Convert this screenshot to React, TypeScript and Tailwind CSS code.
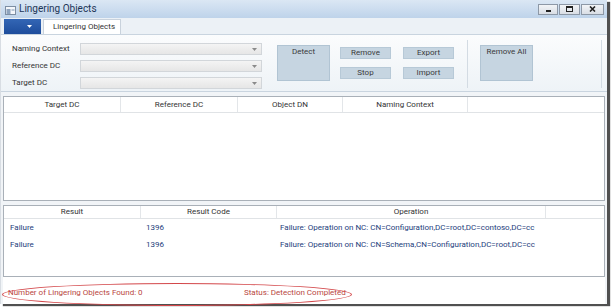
import React from "react";

const Combo = () => (
  <div className="h-[12px] w-[182px] border border-[#d2d6da] bg-gradient-to-b from-[#f4f4f4] to-[#e6e6e6] flex items-center justify-end pr-[4px]">
    <svg width="5" height="3" viewBox="0 0 5 3"><path d="M0 0 L5 0 L2.5 3 Z" fill="#8a8a8a" /></svg>
  </div>
);

const SmallBtn = ({ label }: { label: string }) => (
  <div className="h-[12px] w-[51px] bg-[#c6d5e1] border border-[#b7c9d7] flex items-center justify-center text-[#3a3a3a]">
    {label}
  </div>
);

const BigBtn = ({ label }: { label: string }) => (
  <div className="h-[36px] w-[53px] bg-[#c6d5e1] border border-[#b1c4d3] flex justify-center pt-[2px] text-[#3a3a3a]">
    {label}
  </div>
);

export default function App() {
  return (
    <div className="w-[611px] h-[308px] bg-white overflow-hidden relative font-['Roboto',sans-serif] text-[8px] leading-none">
      <div className="w-[607px] h-[304px] flex flex-col bg-[#f1f4f7] border-l border-[#d8dde3] shadow-[3px_2px_1px_#505050]">
        {/* Title bar */}
        <div className="h-[18px] flex items-center bg-gradient-to-b from-[#dbe7f4] to-[#bed3ea] shrink-0">
          <svg className="ml-[4px] mt-[2px]" width="11" height="9" viewBox="0 0 11 9">
            <rect x="0.5" y="0.5" width="10" height="8" fill="#f4f7fb" stroke="#7d8ea3" />
            <rect x="1.5" y="3" width="4" height="5" fill="#8fa4bd" />
            <rect x="6.5" y="3" width="3" height="2" fill="#b9c7d6" />
          </svg>
          <span className="ml-[3px] text-[10px] text-[#1d3557]">Lingering Objects</span>
          <div className="ml-auto mr-[3px] flex gap-[1px] items-center">
            <div className="w-[20px] h-[11px] bg-gradient-to-b from-[#f2f4f7] to-[#d9dee5] border border-[#8d98a6] flex items-end justify-center pb-[2px]">
              <div className="w-[5px] h-[2px] bg-[#222]" />
            </div>
            <div className="w-[21px] h-[11px] bg-gradient-to-b from-[#f2f4f7] to-[#d9dee5] border border-[#8d98a6] flex items-center justify-center">
              <div className="w-[7px] h-[6px] border border-[#222] border-t-2" />
            </div>
            <div className="w-[23px] h-[11px] bg-gradient-to-b from-[#f2f4f7] to-[#d9dee5] border border-[#8d98a6] flex items-center justify-center">
              <svg width="7" height="6" viewBox="0 0 7 6"><path d="M1 0.5 L6 5.5 M6 0.5 L1 5.5" stroke="#222" strokeWidth="1.6" /></svg>
            </div>
          </div>
        </div>
        {/* Tab row */}
        <div className="h-[16px] flex items-end bg-[#ecf1f6] shrink-0">
          <div className="ml-[3px] w-[37px] h-[15px] bg-gradient-to-b from-[#3366b5] to-[#1e4d9c] flex items-center pl-[23px]">
            <svg width="5" height="3" viewBox="0 0 5 3"><path d="M0 0 L5 0 L2.5 3 Z" fill="#fff" /></svg>
          </div>
          <div className="ml-[2px] w-[78px] h-[15px] bg-white border border-b-0 border-[#c9d2dc] flex items-center pl-[9px] text-[#333] whitespace-nowrap">
            Lingering Objects
          </div>
        </div>
        {/* Ribbon */}
        <div className="h-[58px] shrink-0 bg-gradient-to-b from-[#fbfcfd] to-[#eef3f7] border-t border-b border-[#c9d4df] flex items-start">
          <div className="ml-[11px] mt-[8px] grid grid-cols-[68px_182px] gap-y-[5px] items-center text-[#333]">
            <span>Naming Context</span>
            <Combo />
            <span>Reference DC</span>
            <Combo />
            <span>Target DC</span>
            <Combo />
          </div>
          <div className="ml-[15px] mt-[10px]"><BigBtn label="Detect" /></div>
          <div className="ml-[10px] mt-[12px] flex flex-col gap-[8px]">
            <SmallBtn label="Remove" />
            <SmallBtn label="Stop" />
          </div>
          <div className="ml-[12px] mt-[12px] flex flex-col gap-[8px]">
            <SmallBtn label="Export" />
            <SmallBtn label="Import" />
          </div>
          <div className="ml-[13px] mt-[5px] w-px h-[48px] bg-[#d3dbe3]" />
          <div className="ml-[12px] mt-[10px]"><BigBtn label="Remove All" /></div>
          <div className="ml-[68px] mt-[5px] w-px h-[48px] bg-[#d3dbe3]" />
        </div>
        {/* Table 1 */}
        <div className="mt-[4px] mx-[2px] h-[105px] shrink-0 bg-white border border-[#a9b0b8] flex flex-col">
          <div className="h-[16px] border-b border-[#e0e3e6] flex items-center text-[#333]">
            <div className="w-[117px] h-full flex items-center justify-center border-r border-[#e3e6e9]">Target DC</div>
            <div className="w-[117px] h-full flex items-center justify-center border-r border-[#e3e6e9]">Reference DC</div>
            <div className="w-[105px] h-full flex items-center justify-center border-r border-[#e3e6e9]">Object DN</div>
            <div className="w-[125px] h-full flex items-center justify-center border-r border-[#e3e6e9]">Naming Context</div>
            <div className="flex-1" />
          </div>
        </div>
        {/* Table 2 */}
        <div className="mt-[4px] mx-[2px] h-[72px] shrink-0 bg-white border border-[#a9b0b8] flex flex-col">
          <div className="h-[13px] border-b border-[#e0e3e6] flex items-center text-[#333] shrink-0">
            <div className="w-[137px] h-full flex items-center justify-center border-r border-[#e3e6e9]">Result</div>
            <div className="w-[136px] h-full flex items-center justify-center border-r border-[#e3e6e9]">Result Code</div>
            <div className="w-[269px] h-full flex items-center justify-center border-r border-[#e3e6e9]">Operation</div>
            <div className="flex-1" />
          </div>
          {[
            "Failure: Operation on NC: CN=Configuration,DC=root,DC=contoso,DC=cc",
            "Failure: Operation on NC: CN=Schema,CN=Configuration,DC=root,DC=cc",
          ].map((op, i) => (
            <div key={i} className="h-[16px] flex items-center text-[#24407c] mt-[1px]">
              <div className="w-[137px] pl-[6px]">Failure</div>
              <div className="w-[136px] pl-[5px]">1396</div>
              <div className="w-[266px] pl-[3px] whitespace-nowrap">{op}</div>
            </div>
          ))}
        </div>
        {/* Status */}
        <div className="flex-1 bg-white mx-[2px] flex items-center pt-[5px] text-[#b8463e]">
          <span className="ml-[5px] w-[236px]">Number of Lingering Objects Found: 0</span>
          <span>Status: Detection Completed</span>
        </div>
      </div>
      <div className="absolute left-[2px] top-[283px] w-[350px] h-[23px] rounded-[50%] border-[1.5px] border-[#d3474a] pointer-events-none" />
    </div>
  );
}
